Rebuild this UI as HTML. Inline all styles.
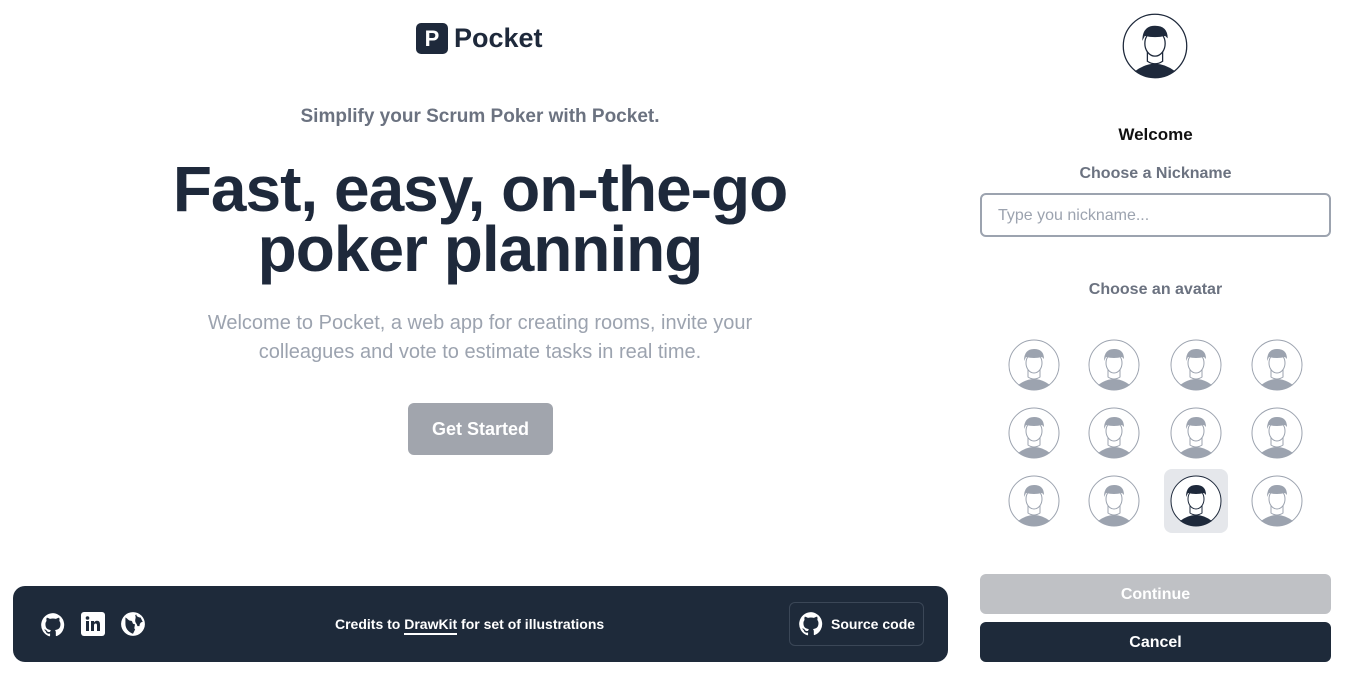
<!DOCTYPE html>
<html><head><meta charset="utf-8"><style>
*{box-sizing:border-box;margin:0;padding:0}
body{width:1361px;height:676px;background:#fff;font-family:"Liberation Sans",sans-serif;position:relative;overflow:hidden;color:#1e293b}
.abs{position:absolute}
.c{text-align:center}
.av{position:absolute;width:52px;height:52px}
</style></head><body>
<svg width="0" height="0" style="position:absolute"><defs>
<g id="face"><circle cx="26" cy="26" r="25" fill="#fff" stroke="currentColor" stroke-width="1"/>
<path d="M10 46 Q26 34 42 46 Q34 51 26 51 Q18 51 10 46Z" fill="currentColor"/>
<path d="M20 30 L20 38 Q26 42 32 38 L32 30Z" fill="#fff" stroke="currentColor"/>
<ellipse cx="26" cy="24" rx="8" ry="10" fill="#fff" stroke="currentColor"/>
<path d="M16 22 Q16 10 26 10 Q36 10 36 20 L34 18 Q26 20 18 18 Z" fill="currentColor"/></g></defs></svg>

<div class="abs" style="left:416px;top:23px;width:32px;height:31px;background:#1e293b;border-radius:5px;color:#fff;font-weight:700;font-size:22px;text-align:center;line-height:31px">P</div>
<div class="abs" style="left:454px;top:23px;font-size:27px;font-weight:700;color:#1e293b">Pocket</div>
<div class="abs c" style="left:0;width:960px;top:106px;font-size:19px;font-weight:700;color:#6b7280">Simplify your Scrum Poker with Pocket.</div>
<div class="abs c" style="left:0;width:960px;top:159px;font-size:64px;font-weight:900;line-height:60px;letter-spacing:-1px;color:#1e293b">Fast, easy, on-the-go<br>poker planning</div>
<div class="abs c" style="left:0;width:960px;top:309px;font-size:20px;line-height:29px;color:#9ca3af">Welcome to Pocket, a web app for creating rooms, invite your<br>colleagues and vote to estimate tasks in real time.</div>
<div class="abs c" style="left:408px;top:403px;width:145px;height:52px;background:#a1a5ad;border-radius:6px;color:#fff;font-weight:700;font-size:18px;line-height:52px">Get Started</div>

<div class="abs" style="left:13px;top:586px;width:935px;height:76px;background:#1e2a3a;border-radius:12px"></div>
<svg class="abs" style="left:40px;top:612px" width="26" height="26" viewBox="0 0 24 24"><path fill="#fff" d="M12 1a11 11 0 0 0-3.5 21.4c.6.1.8-.2.8-.5v-2c-3.1.7-3.7-1.4-3.7-1.4-.5-1.3-1.2-1.6-1.2-1.6-1-.7.1-.7.1-.7 1.1.1 1.7 1.1 1.7 1.1 1 1.7 2.6 1.2 3.2.9.1-.7.4-1.2.7-1.5-2.5-.3-5.1-1.2-5.1-5.5 0-1.2.4-2.2 1.1-3-.1-.3-.5-1.4.1-2.9 0 0 .9-.3 3 1.1a10 10 0 0 1 5.5 0c2.1-1.4 3-1.1 3-1.1.6 1.5.2 2.6.1 2.9.7.8 1.1 1.8 1.1 3 0 4.3-2.6 5.2-5.1 5.5.4.3.8 1 .8 2v3c0 .3.2.6.8.5A11 11 0 0 0 12 1z"/></svg>
<svg class="abs" style="left:81px;top:612px" width="24" height="24" viewBox="0 0 24 24"><rect width="24" height="24" rx="3" fill="#fff"/><rect x="5" y="9" width="3" height="10" fill="#1e2a3a"/><circle cx="6.5" cy="6" r="1.8" fill="#1e2a3a"/><path d="M10 9h3v1.5c.6-1 1.7-1.7 3-1.7 2.3 0 3 1.5 3 3.8V19h-3v-5.5c0-1.2-.4-2-1.4-2S13 12.3 13 13.5V19h-3z" fill="#1e2a3a"/></svg>
<svg class="abs" style="left:120px;top:611px" width="26" height="26" viewBox="0 0 24 24"><circle cx="12" cy="12" r="11" fill="#fff"/><path d="M5 6c2 1 3 3 5 3s1 3 3 3-1 4 1 5l-2 4c-3-1-7-4-7-9zM15 3c0 2 2 3 4 3l2 4c-2 0-3 2-3 4l-2 0c0-2-2-3-2-5 0-2 1-3 0-5z" fill="#1e2a3a"/></svg>
<div class="abs" style="left:335px;top:616px;font-size:14px;font-weight:700;color:#fff">Credits to <span style="border-bottom:2px solid #fff;padding-bottom:1px">DrawKit</span> for set of illustrations</div>
<div class="abs" style="left:789px;top:602px;width:135px;height:44px;border:1px solid #3b4757;border-radius:6px"></div>
<svg class="abs" style="left:798px;top:611px" width="26" height="26" viewBox="0 0 24 24"><path fill="#fff" d="M12 1a11 11 0 0 0-3.5 21.4c.6.1.8-.2.8-.5v-2c-3.1.7-3.7-1.4-3.7-1.4-.5-1.3-1.2-1.6-1.2-1.6-1-.7.1-.7.1-.7 1.1.1 1.7 1.1 1.7 1.1 1 1.7 2.6 1.2 3.2.9.1-.7.4-1.2.7-1.5-2.5-.3-5.1-1.2-5.1-5.5 0-1.2.4-2.2 1.1-3-.1-.3-.5-1.4.1-2.9 0 0 .9-.3 3 1.1a10 10 0 0 1 5.5 0c2.1-1.4 3-1.1 3-1.1.6 1.5.2 2.6.1 2.9.7.8 1.1 1.8 1.1 3 0 4.3-2.6 5.2-5.1 5.5.4.3.8 1 .8 2v3c0 .3.2.6.8.5A11 11 0 0 0 12 1z"/></svg>
<div class="abs" style="left:831px;top:616px;font-size:14px;font-weight:700;color:#fff">Source code</div>

<svg class="abs" style="left:1122px;top:13px;color:#1e293b" width="66" height="66" viewBox="0 0 52 52"><use href="#face"/></svg>
<div class="abs c" style="left:980px;width:351px;top:125px;font-size:17px;font-weight:700;color:#111">Welcome</div>
<div class="abs c" style="left:980px;width:351px;top:165px;font-size:16px;font-weight:700;color:#6b7280">Choose a Nickname</div>
<div class="abs" style="left:980px;top:193px;width:351px;height:44px;border:2px solid #9ca3af;border-radius:6px;padding-left:16px;line-height:42px;font-size:16px;color:#9ca3af">Type you nickname...</div>
<div class="abs c" style="left:980px;width:351px;top:281px;font-size:16px;font-weight:700;color:#6b7280">Choose an avatar</div>
<div class="abs" style="left:1164px;top:469px;width:64px;height:64px;background:#e5e7eb;border-radius:8px"></div>
<div style="color:#9ca3af">
<svg class="av" style="left:1008px;top:339px" viewBox="0 0 52 52"><use href="#face"/></svg>
<svg class="av" style="left:1088px;top:339px" viewBox="0 0 52 52"><use href="#face"/></svg>
<svg class="av" style="left:1170px;top:339px" viewBox="0 0 52 52"><use href="#face"/></svg>
<svg class="av" style="left:1251px;top:339px" viewBox="0 0 52 52"><use href="#face"/></svg>
<svg class="av" style="left:1008px;top:407px" viewBox="0 0 52 52"><use href="#face"/></svg>
<svg class="av" style="left:1088px;top:407px" viewBox="0 0 52 52"><use href="#face"/></svg>
<svg class="av" style="left:1170px;top:407px" viewBox="0 0 52 52"><use href="#face"/></svg>
<svg class="av" style="left:1251px;top:407px" viewBox="0 0 52 52"><use href="#face"/></svg>
<svg class="av" style="left:1008px;top:475px" viewBox="0 0 52 52"><use href="#face"/></svg>
<svg class="av" style="left:1088px;top:475px" viewBox="0 0 52 52"><use href="#face"/></svg>
<svg class="av" style="left:1170px;top:475px;color:#1e293b" viewBox="0 0 52 52"><use href="#face"/></svg>
<svg class="av" style="left:1251px;top:475px" viewBox="0 0 52 52"><use href="#face"/></svg>
</div>
<div class="abs c" style="left:980px;top:574px;width:351px;height:40px;background:#bfc1c5;border-radius:6px;color:#fff;font-weight:700;font-size:16px;line-height:41px">Continue</div>
<div class="abs c" style="left:980px;top:622px;width:351px;height:40px;background:#1e2a3a;border-radius:6px;color:#fff;font-weight:700;font-size:16px;line-height:41px">Cancel</div>
</body></html>
